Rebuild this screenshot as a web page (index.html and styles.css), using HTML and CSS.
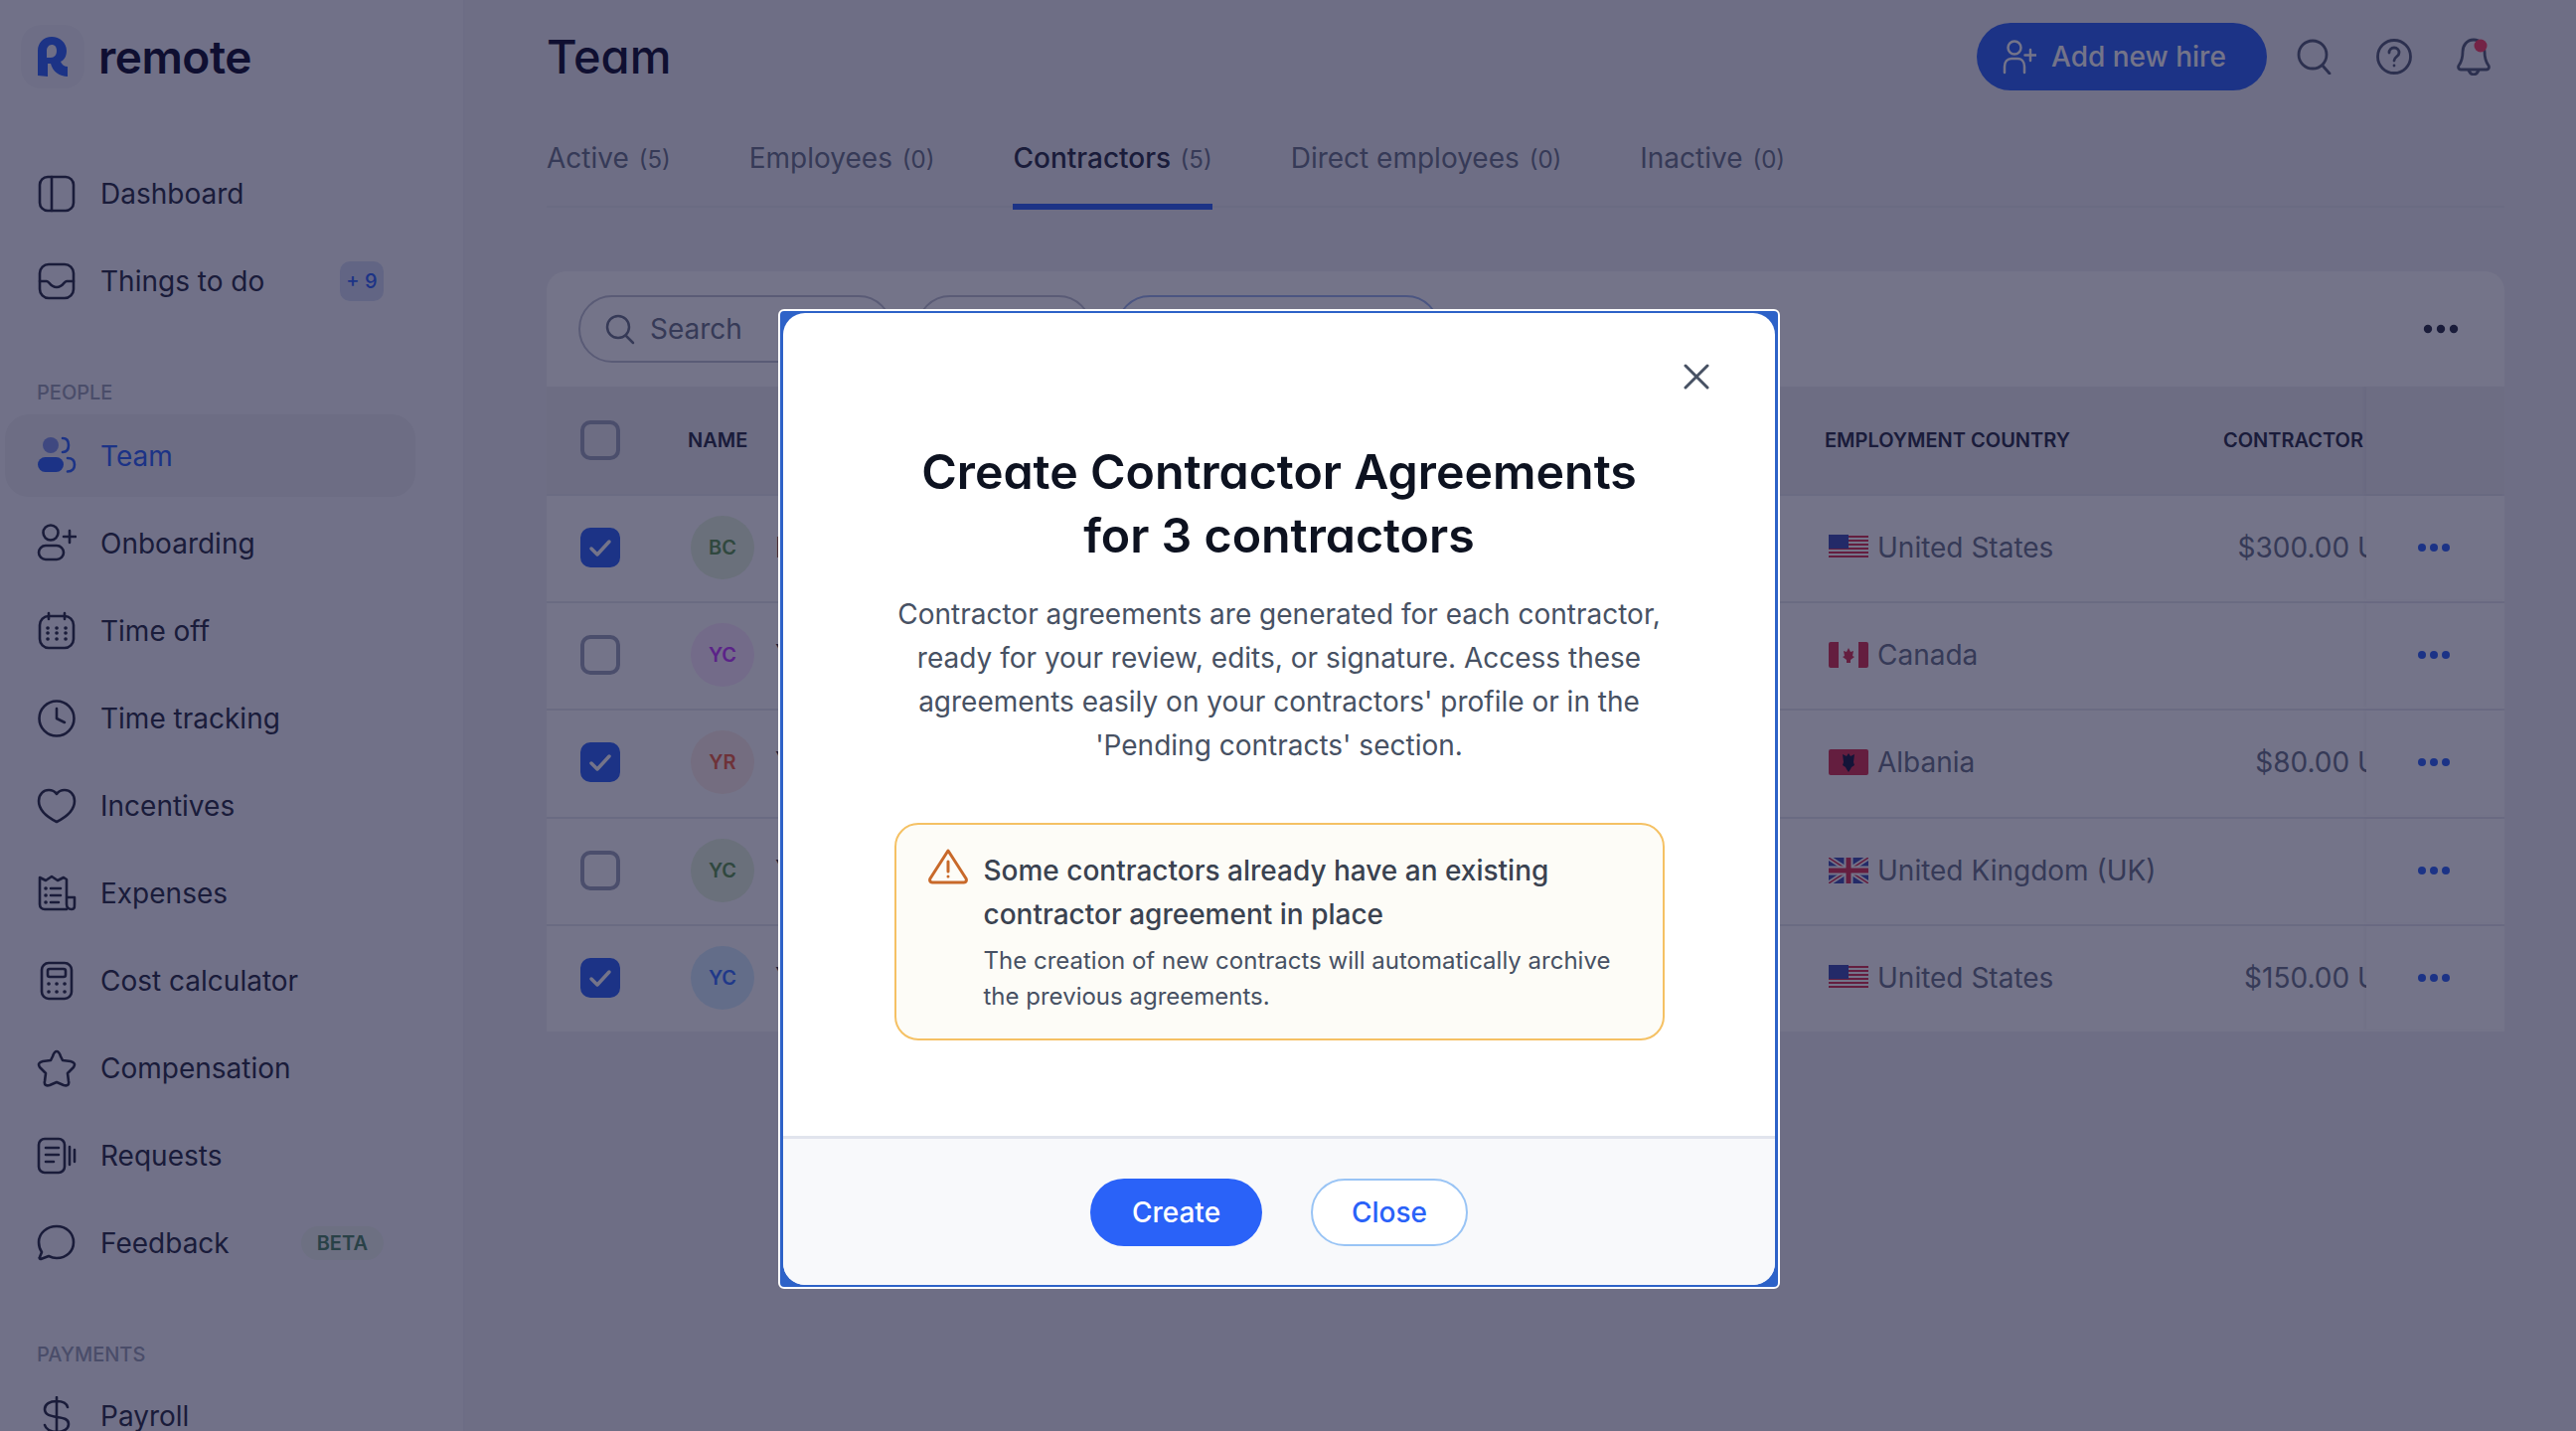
FILE: index.html
```html
<!DOCTYPE html>
<html lang="en">
<head>
  <meta charset="UTF-8">
  <title>Team | Remote</title>
  <link rel="stylesheet" href="styles.css">
</head>
<body>
  <div class="page">
    <aside class="sidebar">
      <div class="logo">
        <div class="logo-badge">
          <svg width="32" height="42" viewBox="0 0 32 42"><path d="M1 40V15C1 7 7 1 15 1s15 6 15 14c0 5-2 9-6 11 1 3 4 5 7 5v10c-8 0-15-5-17-13h-3v13z M10 22h4c4 0 6-3 6-7s-2-6-5-6-5 3-5 6z" fill="#2a62f8" fill-rule="evenodd"/></svg>
        </div>
        <span class="logo-word">remote</span>
      </div>

      <nav class="nav-group first">
        <a class="nav-item">
          <svg class="nav-icon" viewBox="0 0 40 40"><rect x="3" y="3" width="34" height="34" rx="8"/><path d="M15 3v34"/></svg>
          Dashboard
        </a>
        <a class="nav-item">
          <svg class="nav-icon" viewBox="0 0 40 40"><path d="M12 3h16c5 0 9 4 9 9v16c0 5-4 9-9 9H12c-5 0-9-4-9-9V12c0-5 4-9 9-9z"/><path d="M3 20h7c3 0 3 6 10 6s7-6 10-6h7"/></svg>
          Things to do
          <span class="count-badge">+ 9</span>
        </a>
      </nav>

      <div class="nav-label">PEOPLE</div>
      <nav class="nav-group">
        <a class="nav-item active">
          <svg class="nav-icon" viewBox="0 0 40 40"><circle cx="14" cy="9" r="8" fill="#7f95e8" stroke="none"/><rect x="1" y="21" width="26" height="15" rx="7.5" fill="#2a62f8" stroke="none"/><path d="M26 2c4 0 6 3 6 7s-2 7-6 7M31 22c5 0 7 3 7 6.500s-2 7-7 7" stroke="#2a62f8"/></svg>
          Team
        </a>
        <a class="nav-item">
          <svg class="nav-icon" viewBox="0 0 40 40"><circle cx="14" cy="9" r="7.500"/><rect x="2" y="22" width="25" height="14" rx="7"/><path d="M33 7v12M27 13h12"/></svg>
          Onboarding
        </a>
        <a class="nav-item">
          <svg class="nav-icon" viewBox="0 0 40 40"><rect x="3" y="5" width="34" height="32" rx="9"/><path d="M12 2v6M28 2v6"/><path class="dots" d="M11 17h.1M20 17h.1M29 17h.1M11 22h.1M20 22h.1M29 22h.1M11 28h.1M20 28h.1M29 28h.1"/></svg>
          Time off
        </a>
        <a class="nav-item">
          <svg class="nav-icon" viewBox="0 0 40 40"><circle cx="20" cy="20" r="17.500"/><path d="M20 10v10l8 4"/></svg>
          Time tracking
        </a>
        <a class="nav-item">
          <svg class="nav-icon" viewBox="0 0 40 40"><path d="M20 36C10 31 2 24 2 15 2 8 7 4 12 4c3 0 6 1 8 4 2-3 5-4 8-4 5 0 10 4 10 11 0 9-8 16-18 21z"/></svg>
          Incentives
        </a>
        <a class="nav-item">
          <svg class="nav-icon" viewBox="0 0 40 40"><path d="M30 36H8c-3 0-5-2-5-5V4l6 3 6-4 6 4 6-3 3 2v25c0 3 2 5 5 5s3-2 3-5v-7h-8"/><path d="M14 15h10M14 22h10M14 29h8"/><path class="dots" d="M9 15h.1M9 22h.1M9 29h.1"/></svg>
          Expenses
        </a>
        <a class="nav-item">
          <svg class="nav-icon" viewBox="0 0 40 40"><rect x="5" y="2" width="30" height="36" rx="7"/><rect x="11" y="8" width="18" height="8" rx="2"/><path class="dots" d="M12 23h.1M20 23h.1M28 23h.1M12 31h.1M20 31h.1M28 31h.1"/></svg>
          Cost calculator
        </a>
        <a class="nav-item">
          <svg class="nav-icon" viewBox="0 0 40 40"><path d="M20 3c2 0 3 2 4 5l2 4 8 1c4 1 5 3 3 6l-6 6 1 8c1 4-2 5-5 4l-7-3-7 3c-3 1-6 0-5-4l1-8-6-6c-2-3-1-5 3-6l8-1 2-4c1-3 2-5 4-5z"/></svg>
          Compensation
        </a>
        <a class="nav-item">
          <svg class="nav-icon" viewBox="0 0 40 40"><rect x="2" y="3" width="26" height="34" rx="6"/><path d="M9 12h13M9 19h13M9 26h8M33 11v18M38 14v12"/></svg>
          Requests
        </a>
        <a class="nav-item">
          <svg class="nav-icon" viewBox="0 0 40 40"><path d="M20 3c10 0 17 7 17 16s-7 16-17 16c-3 0-6-1-8-2l-8 3c-1 0-2-1-1-2l2-5c-2-3-3-6-3-10C2 10 10 3 20 3z"/></svg>
          Feedback
          <span class="beta-badge">BETA</span>
        </a>
      </nav>

      <div class="nav-label">PAYMENTS</div>
      <nav class="nav-group payments">
        <a class="nav-item">
          <svg class="nav-icon" viewBox="0 0 40 40"><path d="M31 11c-1-4-5-6-11-6-7 0-12 3-12 8 0 12 24 4 24 15 0 5-5 8-12 8-6 0-11-3-12-7M20 1v38"/></svg>
          Payroll
        </a>
      </nav>
    </aside>

    <main class="main">
      <header class="topbar">
        <h1 class="page-title">Team</h1>
        <div class="top-actions">
          <button class="add-hire">
            <svg width="34" height="36" viewBox="0 0 34 36" fill="none" stroke="currentColor" stroke-width="2.500" stroke-linecap="round"><circle cx="12" cy="9" r="6.500"/><path d="M2 34v-6c0-5 3-8 7-8h6c4 0 7 3 7 8v6M28 11v11M22.500 16.500h11"/></svg>
            Add new hire
          </button>
          <svg class="top-icon" viewBox="0 0 36 36"><circle cx="16" cy="16" r="14"/><path d="M26 27l7 8"/></svg>
          <svg class="top-icon" viewBox="0 0 36 36"><circle cx="18" cy="18" r="16.500"/><path d="M13 14c0-3 2-5 5-5s5 2 5 5c0 4-5 4-5 8M18 27v.1"/></svg>
          <svg class="top-icon bell" viewBox="0 0 36 38"><path d="M18 2C11 2 7 8 7 14c0 7-1 10-4 14-1 2 0 4 2 4h26c2 0 3-2 2-4-3-4-4-7-4-14 0-6-4-12-11-12zM13 33c1 2 3 4 5 4s4-2 5-4"/><circle class="bell-dot" cx="25" cy="8" r="6.500"/></svg>
        </div>
      </header>

      <div class="tabs">
        <a class="tab">Active <small>(5)</small></a>
        <a class="tab">Employees <small>(0)</small></a>
        <a class="tab active">Contractors <small>(5)</small></a>
        <a class="tab">Direct employees <small>(0)</small></a>
        <a class="tab">Inactive <small>(0)</small></a>
      </div>

      <section class="panel">
        <div class="toolbar">
          <div class="pill search-pill">
            <svg width="32" height="32" viewBox="0 0 32 32" fill="none" stroke="currentColor" stroke-width="2.500" stroke-linecap="round"><circle cx="14" cy="14" r="11"/><path d="M22 23l7 7"/></svg>
            Search
          </div>
          <div class="pill filter-pill"></div>
          <div class="pill status-pill"></div>
          <svg class="more toolbar-more" width="36" height="10" viewBox="0 0 36 10"><circle cx="5" cy="5" r="4.200"/><circle cx="18" cy="5" r="4.200"/><circle cx="31" cy="5" r="4.200"/></svg>
        </div>

        <div class="row head">
          <div class="cell-check"><span class="checkbox"></span></div>
          <div class="head-name">NAME</div>
          <div>EMPLOYMENT COUNTRY</div>
          <div class="clip-cell">CONTRACTOR</div>
          <div class="cell-actions"></div>
        </div>

        <div class="row">
          <div class="cell-check"><span class="checkbox checked"><svg width="24" height="20" viewBox="0 0 24 20"><path d="M3 11l6 6L21 4"/></svg></span></div>
          <div class="cell-name"><span class="avatar green">BC</span><span class="name">B</span></div>
          <div class="cell-country">
            <svg class="flag" viewBox="0 0 40 26"><rect width="40" height="26" rx="2" fill="#fff"/><path d="M0 2h40M0 6h40M0 10h40M0 14h40M0 18h40M0 22h40" stroke="#d8304c" stroke-width="2"/><rect width="20" height="14" fill="#3c4bb0"/></svg>
            United States
          </div>
          <div class="clip-cell amount"><span>$300.00 USD</span></div>
          <div class="cell-actions"><svg class="more blue" width="32" height="10" viewBox="0 0 32 10"><circle cx="4" cy="5" r="4"/><circle cx="16" cy="5" r="4"/><circle cx="28" cy="5" r="4"/></svg></div>
        </div>

        <div class="row">
          <div class="cell-check"><span class="checkbox"></span></div>
          <div class="cell-name"><span class="avatar purple">YC</span><span class="name">Y</span></div>
          <div class="cell-country">
            <svg class="flag" viewBox="0 0 40 26"><rect width="40" height="26" rx="2" fill="#fff"/><path d="M2 0h8v26H2a2 2 0 0 1-2-2V2a2 2 0 0 1 2-2zM30 0h8a2 2 0 0 1 2 2v22a2 2 0 0 1-2 2h-8z" fill="#d8304c"/><path d="M20 6l2 4 3-1-1 5 2 1-4 3v3h-4v-3l-4-3 2-1-1-5 3 1z" fill="#d8304c"/></svg>
            Canada
          </div>
          <div class="clip-cell amount"></div>
          <div class="cell-actions"><svg class="more blue" width="32" height="10" viewBox="0 0 32 10"><circle cx="4" cy="5" r="4"/><circle cx="16" cy="5" r="4"/><circle cx="28" cy="5" r="4"/></svg></div>
        </div>

        <div class="row">
          <div class="cell-check"><span class="checkbox checked"><svg width="24" height="20" viewBox="0 0 24 20"><path d="M3 11l6 6L21 4"/></svg></span></div>
          <div class="cell-name"><span class="avatar red">YR</span><span class="name">Y</span></div>
          <div class="cell-country">
            <svg class="flag" viewBox="0 0 40 26"><rect width="40" height="26" rx="2" fill="#d8304c"/><path d="M20 4l2 3 4-2-1 8 1 3-3 2-1 2-2 3-2-3-1-2-3-2 1-3-1-8 4 2z" fill="#14163a"/></svg>
            Albania
          </div>
          <div class="clip-cell amount"><span>$80.00 USD</span></div>
          <div class="cell-actions"><svg class="more blue" width="32" height="10" viewBox="0 0 32 10"><circle cx="4" cy="5" r="4"/><circle cx="16" cy="5" r="4"/><circle cx="28" cy="5" r="4"/></svg></div>
        </div>

        <div class="row">
          <div class="cell-check"><span class="checkbox"></span></div>
          <div class="cell-name"><span class="avatar green">YC</span><span class="name">Y</span></div>
          <div class="cell-country">
            <svg class="flag" viewBox="0 0 40 26"><rect width="40" height="26" rx="2" fill="#3c4bb0"/><path d="M0 0l40 26M40 0L0 26" stroke="#fff" stroke-width="5"/><path d="M0 0l40 26M40 0L0 26" stroke="#d8304c" stroke-width="1.500"/><path d="M20 0v26M0 13h40" stroke="#fff" stroke-width="9"/><path d="M20 0v26M0 13h40" stroke="#d8304c" stroke-width="5"/></svg>
            United Kingdom (UK)
          </div>
          <div class="clip-cell amount"></div>
          <div class="cell-actions"><svg class="more blue" width="32" height="10" viewBox="0 0 32 10"><circle cx="4" cy="5" r="4"/><circle cx="16" cy="5" r="4"/><circle cx="28" cy="5" r="4"/></svg></div>
        </div>

        <div class="row">
          <div class="cell-check"><span class="checkbox checked"><svg width="24" height="20" viewBox="0 0 24 20"><path d="M3 11l6 6L21 4"/></svg></span></div>
          <div class="cell-name"><span class="avatar blue">YC</span><span class="name">Y</span></div>
          <div class="cell-country">
            <svg class="flag" viewBox="0 0 40 26"><rect width="40" height="26" rx="2" fill="#fff"/><path d="M0 2h40M0 6h40M0 10h40M0 14h40M0 18h40M0 22h40" stroke="#d8304c" stroke-width="2"/><rect width="20" height="14" fill="#3c4bb0"/></svg>
            United States
          </div>
          <div class="clip-cell amount"><span>$150.00 USD</span></div>
          <div class="cell-actions"><svg class="more blue" width="32" height="10" viewBox="0 0 32 10"><circle cx="4" cy="5" r="4"/><circle cx="16" cy="5" r="4"/><circle cx="28" cy="5" r="4"/></svg></div>
        </div>
      </section>
    </main>
  </div>

  <div class="overlay">
    <div class="modal-focus">
      <div class="modal">
        <div class="modal-body">
          <svg class="modal-close" width="26" height="26" viewBox="0 0 26 26"><path d="M2 2l22 22M24 2L2 24"/></svg>
          <h2 class="modal-title">Create Contractor Agreements<br>for 3 contractors</h2>
          <p class="modal-text">Contractor agreements are generated for each contractor, ready for your review, edits, or signature. Access these agreements easily on your contractors' profile or in the 'Pending contracts' section.</p>
          <div class="callout">
            <svg class="callout-icon" width="40" height="36" viewBox="0 0 40 36"><path d="M20 2L2 30c-1 2 0 4 2 4h32c2 0 3-2 2-4z"/><path d="M20 13v10M20 28v.1"/></svg>
            <div>
              <div class="callout-title">Some contractors already have an existing contractor agreement in place</div>
              <div class="callout-text">The creation of new contracts will automatically archive the previous agreements.</div>
            </div>
          </div>
        </div>
        <div class="modal-footer">
          <button class="btn btn-primary">Create</button>
          <button class="btn btn-outline">Close</button>
        </div>
      </div>
    </div>
  </div>
</body>
</html>
```

FILE: styles.css
```css
* {
  box-sizing: border-box;
}

html, body {
  margin: 0;
  height: 100%;
  overflow: hidden;
}

body {
  font-family: Inter, "Liberation Sans", sans-serif;
  font-size: 28px;
  color: #252a3f;
}

.page {
  display: grid;
  grid-template-columns: 468px 1fr;
  height: 100vh;
  background: #f1f1f4;
}

/* sidebar */
.sidebar {
  height: 100vh;
  overflow: hidden;
  padding: 25px 48px 0 5px;
  background: #f8f8fd;
  border-right: 2px solid #eeeef4;
}

.logo {
  display: flex;
  align-items: center;
  gap: 14px;
  margin-left: 16px;
  height: 63px;
}

.logo-badge {
  display: flex;
  align-items: center;
  justify-content: center;
  width: 64px;
  height: 64px;
  border-radius: 20px;
  background: #f0f1f7;
}

.logo-word {
  font-size: 46px;
  font-weight: 600;
  letter-spacing: -0.5px;
  color: #0b0b2b;
}

.nav-group.first {
  margin-top: 63px;
}

.nav-item {
  display: flex;
  align-items: center;
  gap: 24px;
  height: 88px;
  padding-left: 32px;
  border-radius: 24px;
}

.nav-item.active {
  height: 83px;
  margin: 2px 0 3px;
  color: #2a62f8;
  background: #edeef2;
}

.nav-icon {
  flex: none;
  width: 40px;
  height: 40px;
  fill: none;
  stroke: #252a3f;
  stroke-width: 2.6;
  stroke-linecap: round;
  stroke-linejoin: round;
}

.nav-icon .dots {
  stroke-width: 3.6;
}

.nav-label {
  margin-top: 56px;
  margin-bottom: 10px;
  margin-left: 32px;
  font-size: 20px;
  line-height: 24px;
  font-weight: 500;
  color: #99a0b2;
}

.payments {
  margin-top: -4px;
}

.count-badge {
  width: 44px;
  margin-left: auto;
  margin-right: 32px;
  height: 40px;
  line-height: 40px;
  text-align: center;
  border-radius: 10px;
  font-size: 20px;
  font-weight: 500;
  color: #2a62f8;
  background: #d3dbf2;
}

.beta-badge {
  margin-left: auto;
  margin-right: 32px;
  padding: 0 16px;
  height: 34px;
  line-height: 34px;
  border-radius: 17px;
  font-size: 20px;
  font-weight: 600;
  color: #4a8460;
  background: #eef4ee;
}

/* main column */
.main {
  min-width: 0;
  padding: 0 72px 0 82px;
}

.topbar {
  display: flex;
  align-items: center;
  justify-content: space-between;
  height: 112px;
}

.page-title {
  margin: 0;
  font-size: 47px;
  font-weight: 500;
  font-feature-settings: "cv11";
  color: #0b0b2b;
}

.top-actions {
  display: flex;
  align-items: center;
  gap: 44px;
  margin-top: 2px;
  padding-right: 13px;
}

.add-hire {
  display: flex;
  align-items: center;
  gap: 15px;
  width: 292px;
  height: 68px;
  margin-right: -14px;
  padding: 0 0 0 26px;
  border: 0;
  border-radius: 34px;
  font: inherit;
  font-weight: 500;
  color: #fff;
  background: #2a62f8;
}

.top-icon {
  width: 36px;
  height: 36px;
  fill: none;
  stroke: #525a72;
  stroke-width: 2.8;
  stroke-linecap: round;
  stroke-linejoin: round;
}

.bell {
  height: 38px;
}

.bell-dot {
  fill: #ff3b5c;
  stroke: none;
}

.tabs {
  display: flex;
  gap: 79px;
  border-bottom: 2px solid #e7e8ee;
}

.tab {
  height: 99px;
  margin-bottom: -4px;
  padding-top: 27px;
  line-height: 40px;
  color: #687286;
  border-bottom: 6px solid transparent;
}

.tab small {
  margin-left: 2px;
  font-size: 24px;
}

.tab.active {
  color: #252a3f;
  font-weight: 500;
  border-bottom-color: #2a62f8;
}

.tab.active small {
  font-weight: 400;
  color: #687286;
}

/* table */
.panel {
  margin-top: 64px;
  overflow: hidden;
  border-radius: 20px 20px 0 0;
  background: #fff;
}

.toolbar {
  display: flex;
  align-items: center;
  gap: 24px;
  height: 116px;
  padding: 0 46px 0 32px;
}

.pill {
  display: flex;
  align-items: center;
  gap: 14px;
  height: 68px;
  border: 2px solid #bfc3d0;
  border-radius: 34px;
  color: #687286;
}

.search-pill {
  width: 316px;
  padding-left: 24px;
}

.filter-pill {
  width: 177px;
}

.status-pill {
  width: 326px;
  border-color: #9cb4ec;
}

.more {
  flex: none;
  fill: #252a3f;
}

.more.blue {
  fill: #2a62f8;
}

.toolbar-more {
  margin-left: auto;
}

.row {
  display: grid;
  grid-template-columns: 145px 1141px 401px 144px 139px;
  align-items: center;
  height: 108.2px;
  padding-bottom: 2px;
  border-top: 2px solid #e7e8ee;
}

.row.head {
  height: 108px;
  padding-bottom: 0;
  border-top: 0;
  font-size: 20px;
  font-weight: 600;
  background: #ededf0;
}

.cell-check {
  display: flex;
  padding-left: 34px;
}

.checkbox {
  display: flex;
  align-items: center;
  justify-content: center;
  width: 40px;
  height: 40px;
  border: 4px solid #9ba3b8;
  border-radius: 10px;
}

.checkbox.checked {
  border-color: #2a62f8;
  background: #2a62f8;
}

.checkbox path {
  fill: none;
  stroke: #fff;
  stroke-width: 3.5;
  stroke-linecap: round;
  stroke-linejoin: round;
}

.head-name {
  margin-left: -3px;
}

.cell-name {
  display: flex;
  align-items: center;
  gap: 21px;
  font-weight: 500;
}

.avatar {
  display: flex;
  align-items: center;
  justify-content: center;
  width: 64px;
  height: 64px;
  border-radius: 50%;
  font-size: 20px;
  font-weight: 600;
}

.avatar.green {
  color: #5a954b;
  background: #e6f5dc;
}

.avatar.purple {
  color: #c33afd;
  background: #fde9ff;
}

.avatar.red {
  color: #f0603c;
  background: #ffefe8;
}

.avatar.blue {
  color: #3570ff;
  background: #d6efff;
}

.cell-country {
  display: flex;
  align-items: center;
  gap: 9px;
  padding-left: 4px;
  color: #687286;
}

.flag {
  width: 40px;
  height: 26px;
}

.clip-cell {
  overflow: hidden;
  white-space: nowrap;
}

.amount {
  display: flex;
  justify-content: flex-end;
  color: #687286;
}

.amount span {
  flex: none;
  margin-right: -50px;
}

.cell-actions {
  display: flex;
  align-items: center;
  align-self: stretch;
  padding-left: 52px;
  box-shadow: -2px 0 3px rgba(20, 20, 60, 0.04);
}

/* dialog */
.overlay {
  position: fixed;
  inset: 0;
  display: flex;
  align-items: flex-start;
  justify-content: center;
  padding: 311px 18px 0 0;
  background: rgba(19, 18, 55, 0.59);
}

.modal-focus {
  width: 1008px;
  padding: 2px 3px;
  border: 2px solid #fff;
  border-radius: 6px;
  background: #2d62c8;
}

.modal {
  overflow: hidden;
  border-radius: 22px;
  background: #fff;
}

.modal-body {
  position: relative;
  height: 828px;
  padding-top: 128px;
  text-align: center;
}

.modal-close {
  position: absolute;
  top: 51px;
  right: 66px;
  fill: none;
  stroke: #475163;
  stroke-width: 3;
  stroke-linecap: round;
}

.modal-title {
  margin: 0;
  font-size: 48.3px;
  line-height: 64px;
  font-weight: 600;
  font-feature-settings: "cv11";
  color: #0d1220;
}

.modal-text {
  width: 800px;
  margin: 25px auto 0;
  line-height: 44px;
  color: #475163;
}

.callout {
  display: flex;
  gap: 16px;
  width: 775px;
  height: 219px;
  margin: 56px auto 0;
  padding: 24px 32px;
  text-align: left;
  border: 2px solid #f5c164;
  border-radius: 24px;
  background: #fdfcf7;
}

.callout-icon {
  flex: none;
  fill: none;
  stroke: #c8692a;
  stroke-width: 3;
  stroke-linecap: round;
  stroke-linejoin: round;
}

.callout-title {
  line-height: 44px;
  font-weight: 500;
  color: #3a4250;
}

.callout-text {
  margin-top: 7px;
  font-size: 24px;
  line-height: 36px;
  color: #475163;
}

.modal-footer {
  display: flex;
  align-items: center;
  justify-content: center;
  gap: 49px;
  height: 150px;
  border-top: 3px solid #e1e4ed;
  background: #f8f9fb;
}

.btn {
  height: 68px;
  padding: 0;
  border-radius: 34px;
  font: inherit;
  font-weight: 500;
}

.btn-primary {
  width: 173px;
  border: 0;
  color: #fff;
  background: #2a62f8;
}

.btn-outline {
  width: 158px;
  border: 2px solid #99c4f5;
  color: #2a62f8;
  background: #fff;
}
```
